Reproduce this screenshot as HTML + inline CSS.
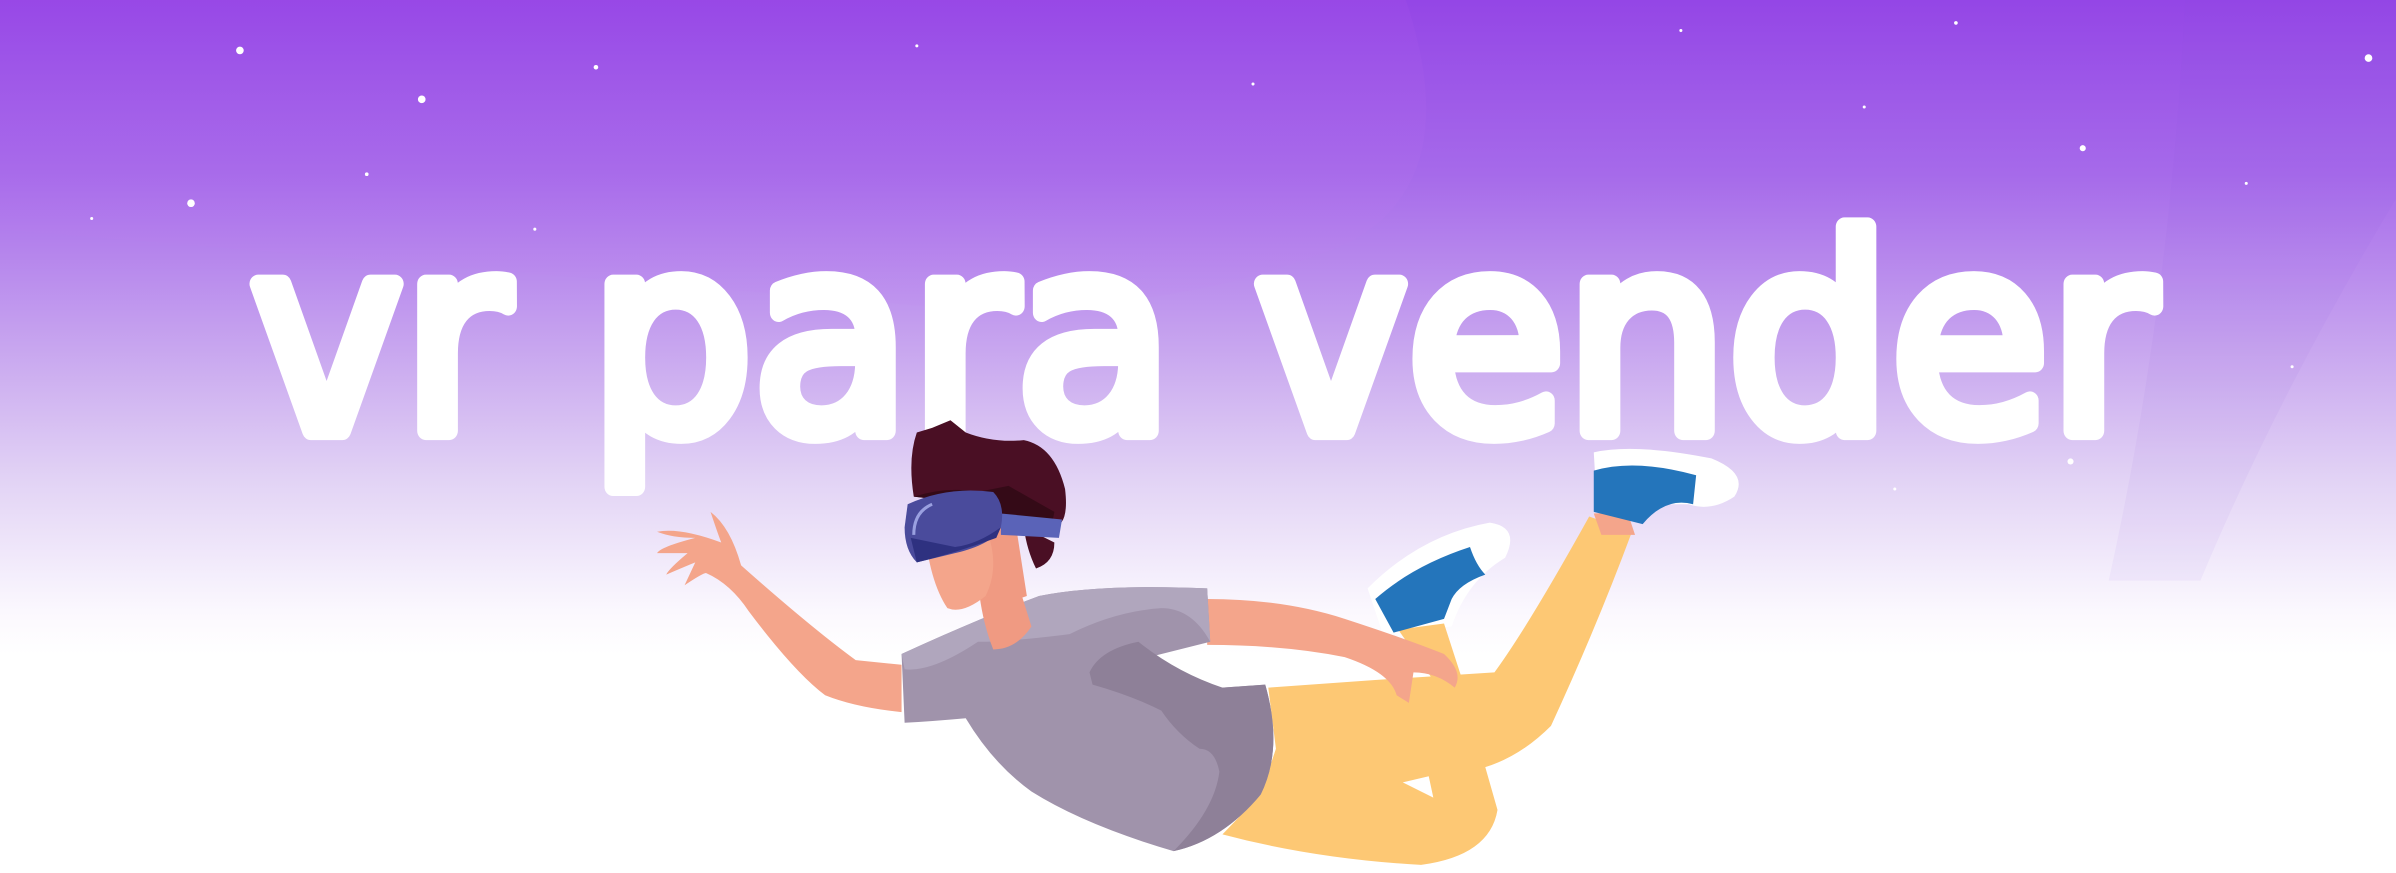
<!DOCTYPE html>
<html><head><meta charset="utf-8"><style>
html,body{margin:0;padding:0;width:2396px;height:873px;overflow:hidden;background:#fff}
svg{display:block}
</style></head><body>
<svg width="2396" height="873" viewBox="0 0 1568 571.3" preserveAspectRatio="none" xmlns="http://www.w3.org/2000/svg">
<defs>
<linearGradient id="bg" x1="0" y1="0" x2="0" y2="1">
<stop offset="0" stop-color="#9446e6"/>
<stop offset="0.2" stop-color="#a66aea"/>
<stop offset="0.4" stop-color="#c8a6ef"/>
<stop offset="0.55" stop-color="#e2d3f5"/>
<stop offset="0.7" stop-color="#fbf8fe"/>
<stop offset="0.75" stop-color="#ffffff"/>
</linearGradient>
<linearGradient id="blob" x1="0" y1="0" x2="0" y2="1">
<stop offset="0" stop-color="#a24fe8" stop-opacity="0.5"/>
<stop offset="1" stop-color="#c08cf0" stop-opacity="0.3"/>
</linearGradient>
</defs>
<rect width="1568" height="571.3" fill="url(#bg)"/>
<path d="M0,0 L920,0 Q960,120 880,160 Q760,210 600,200 L0,150 Z" fill="url(#blob)" opacity="0.5"/>
<path d="M1430,0 L1568,0 L1568,130 Q1490,260 1440,380 L1380,380 Q1420,200 1430,0 Z" fill="#8a52d8" opacity="0.06"/>
<g fill="#fff">
<circle cx="157" cy="33" r="2.5"/><circle cx="276" cy="65" r="2.5"/><circle cx="125" cy="133" r="2.5"/>
<circle cx="1550" cy="38" r="2.5"/><circle cx="1363" cy="97" r="2"/><circle cx="1355" cy="302" r="2"/>
<circle cx="390" cy="44" r="1.5"/><circle cx="60" cy="143" r="1"/><circle cx="240" cy="114" r="1.2"/>
<circle cx="1280" cy="15" r="1.2"/><circle cx="1220" cy="70" r="1"/><circle cx="1470" cy="120" r="1"/>
<circle cx="600" cy="30" r="1"/><circle cx="820" cy="55" r="1"/><circle cx="1100" cy="20" r="1"/>
<circle cx="350" cy="150" r="1"/><circle cx="1500" cy="240" r="1"/><circle cx="1240" cy="320" r="1"/>
</g>
<text x="164" y="282" textLength="1246" lengthAdjust="spacingAndGlyphs" font-family="DejaVu Sans, sans-serif" font-weight="normal" font-size="176" fill="#fff" stroke="#fff" stroke-width="12" stroke-linejoin="round">vr para vender</text>
<!-- white shoe backs -->
<path d="M895,385 Q930,350 975,342 Q995,345 985,365 Q960,380 950,410 L905,415 Z" fill="#fff"/>
<path d="M1043,296 Q1070,290 1120,300 Q1145,310 1135,325 Q1120,335 1105,330 L1045,330 Z" fill="#fff"/>
<!-- left arm -->
<path d="M590,435 L560,432 Q530,410 485,370 Q478,345 465,335 Q470,350 472,355 Q445,345 430,348 Q440,352 455,352 Q432,358 430,362 Q445,362 450,362 Q438,372 436,376 Q450,370 455,368 L448,383 Q460,375 462,375 Q478,382 490,400 Q520,440 540,455 Q560,463 590,466 Z" fill="#f4a58b"/>
<!-- pants -->
<path d="M830,450 L900,445 L978,440 Q1000,410 1040,338 L1068,348 Q1045,410 1015,475 Q995,495 972,502 L980,530 Q975,560 930,566 Q860,562 800,546 L825,520 L835,490 Z" fill="#fdc874"/>
<path d="M918,512 L935,508 L938,522 Z" fill="#fff"/>
<path d="M915,412 L945,408 L957,445 L940,448 Z" fill="#fdc874"/>
<path d="M1043,336 L1065,335 L1070,350 L1048,350 Z" fill="#f4a58b"/>
<!-- shoes -->
<path d="M900,392 Q925,370 962,358 Q966,370 972,376 Q955,382 950,392 L945,405 L912,414 Z" fill="#2475bb"/>
<path d="M1043,308 Q1070,300 1110,311 L1108,330 Q1090,325 1075,343 L1043,335 Z" fill="#2475bb"/>
<!-- right arm -->
<path d="M790,392 Q840,392 880,405 Q920,418 945,428 Q958,440 952,450 Q940,440 925,440 L922,460 L914,455 Q910,440 880,430 Q840,422 790,422 Z" fill="#f4a58b"/>
<!-- torso -->
<path d="M590,428 Q640,405 680,390 Q720,382 790,385 L792,420 L752,430 Q770,447 800,450 L828,448 Q840,490 825,520 Q800,550 768,557 Q710,540 675,518 Q650,500 632,470 Q610,472 592,473 Z" fill="#a093ab"/>
<path d="M590,428 Q640,405 680,390 Q720,382 790,385 L792,420 Q780,398 760,398 Q730,400 700,415 Q660,420 640,420 Q610,440 592,438 Z" fill="#b0a6bd"/>
<path d="M713,440 Q720,425 745,420 Q770,440 800,450 L828,448 Q840,490 825,520 Q800,550 768,557 Q795,530 798,505 Q795,490 785,490 Q770,480 760,465 Q740,455 715,448 Z" fill="#8e8098"/>
<!-- neck -->
<path d="M640,380 L665,378 L675,410 Q665,425 650,425 Q642,405 640,380 Z" fill="#f09a82"/>
<!-- face -->
<path d="M605,345 L660,340 L670,385 Q660,395 645,390 Q630,402 620,398 Q608,380 605,345 Z" fill="#f4a58b"/>
<path d="M645,345 L665,345 L672,390 Q660,395 645,390 Q655,370 645,345 Z" fill="#f09a82"/>
<!-- hair -->
<path d="M598,325 Q594,300 600,283 L610,280 L622,275 L632,283 Q650,290 670,288 Q690,292 697,320 Q700,345 688,345 L680,350 L690,355 Q690,368 678,372 Q672,360 670,345 L640,330 Z" fill="#4a0f24"/>
<path d="M598,325 Q620,318 640,322 L660,318 L690,335 L688,345 Q660,340 640,330 Z" fill="#340a17"/>
<!-- goggles -->
<path d="M655,336 L695,340 L693,352 L655,350 Z" fill="#5a63b8"/>
<path d="M594,330 Q620,318 650,322 Q658,330 655,345 Q650,356 625,362 L600,368 Q592,360 592,345 Z" fill="#4a4b9c"/>
<path d="M596,352 L600,368 Q625,362 652,352 L655,345 Q640,356 625,358 Z" fill="#2e3180"/>
<path d="M598,350 Q598,335 610,330" stroke="#9aa0e0" stroke-width="2" fill="none"/>
</svg>
</body></html>
